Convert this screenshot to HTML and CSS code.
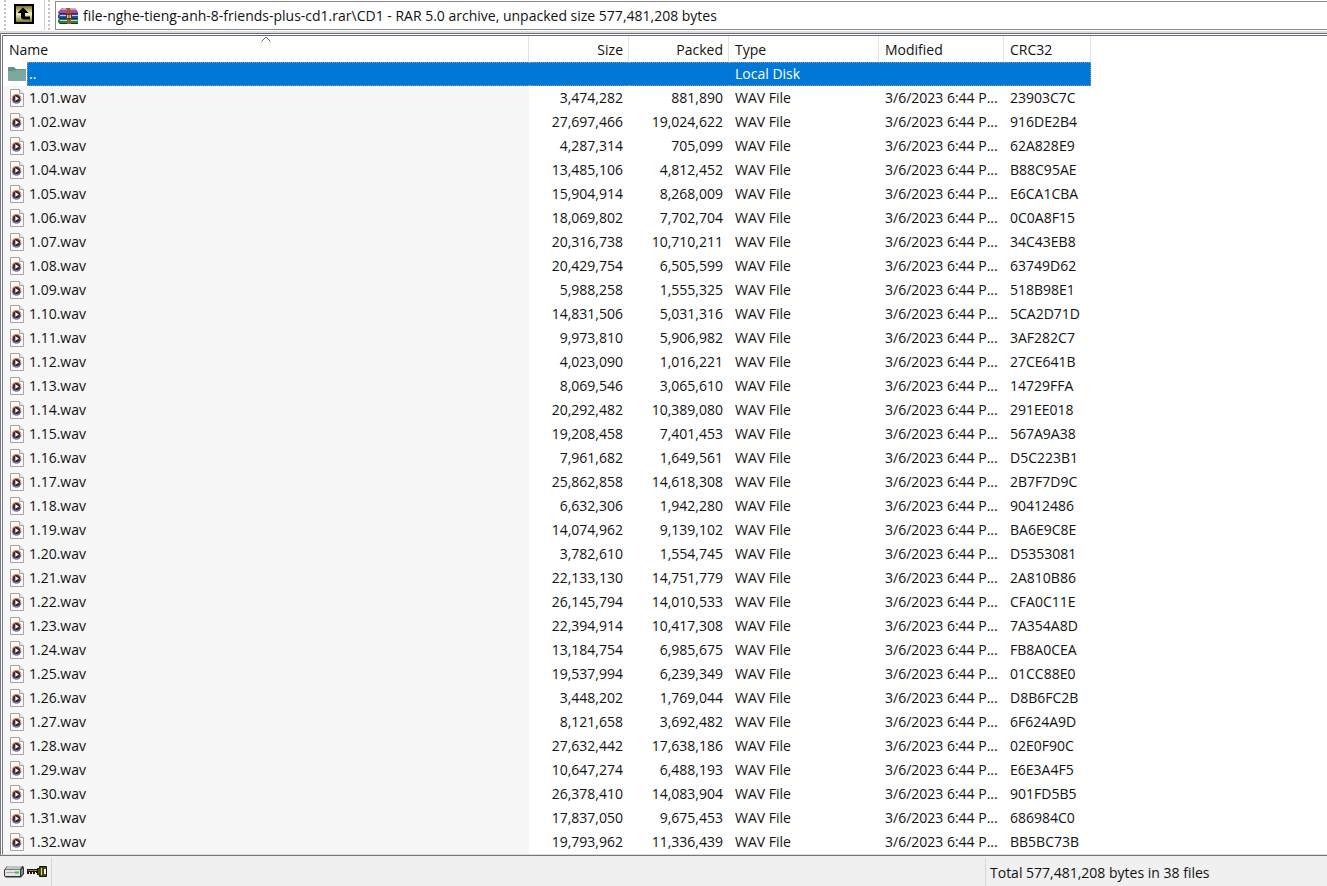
FILE: index.html
```html
<!DOCTYPE html>
<html lang="en">
<head>
    <meta charset="utf-8">
    <title>file-nghe-tieng-anh-8-friends-plus-cd1.rar</title>
    <link rel="stylesheet" href="styles.css">
</head>
<body>
    <svg class="symbols" aria-hidden="true">
        <symbol id="wav" viewBox="0 0 16 18">
            <path d="M1.5 .5h9l4 4v13h-13z" fill="#fdfdfd" stroke="#a4a4a4"/>
            <path d="M10.5 .5v4h4" fill="#eee" stroke="#a4a4a4"/>
            <circle cx="7.5" cy="9.5" r="4.8" fill="#ea9468"/>
            <path d="M2.7 10a4.8 4.8 0 0 0 9.600 0z" fill="#7478b4"/>
            <circle cx="7.500" cy="9.500" r="3.600" fill="#3a2628"/>
            <path d="M6.300 7.300v4.400l3.600-2.200z" fill="#fff"/>
        </symbol>
    </svg>

    <header class="toolbar">
        <div class="grip"></div>
        <button type="button" class="up-button" aria-label="Up one level">
            <svg width="20" height="20" viewBox="0 0 20 20">
                <defs>
                    <linearGradient id="gold" x2="0" y2="1">
                        <stop offset="0" stop-color="#6b6220"/>
                        <stop offset=".5" stop-color="#f4efc4"/>
                        <stop offset="1" stop-color="#6e6628"/>
                    </linearGradient>
                </defs>
                <rect x="1" y="1" width="18" height="18" fill="url(#gold)" stroke="#000" stroke-width="2"/>
                <path d="M9 3.500L3.500 9H7v3.500q0 3 3 3h6v-3h-5V9h3.500z" fill="#000"/>
            </svg>
        </button>
        <div class="grip second"></div>
        <label class="address">
            <svg width="21" height="16" viewBox="0 0 21 16" aria-hidden="true">
                <path d="M4 0h13l3 4v2H2L0 4z" fill="#a34f8f"/>
                <path d="M5 0h12l1 2H3z" fill="#dba0c4"/>
                <path d="M0 4l2 1h18v1H2L0 5z" fill="#571b50"/>
                <path d="M1 6h19v5H2L0 9V7z" fill="#2c4fae"/>
                <path d="M2 7h18v1H2z" fill="#c3cdea"/>
                <path d="M0 9l2 1h18v1H2L0 10z" fill="#141f5c"/>
                <path d="M1 11h19v5H2l-2-2v-2z" fill="#258544"/>
                <path d="M2 12h18v1H2z" fill="#b5dcb9"/>
                <path d="M0 14l2 1h18v1H2z" fill="#0e401e"/>
                <path d="M8 0h4l1 5v11H9V5z" fill="#9a5a34"/>
                <path d="M8.500 6.500h5v4h-5z" fill="#dcc7a4" stroke="#57351c"/>
                <path d="M11 5v7" stroke="#57351c"/>
            </svg>
            <input type="text" aria-label="Address" readonly value="file-nghe-tieng-anh-8-friends-plus-cd1.rar\CD1 - RAR 5.0 archive, unpacked size 577,481,208 bytes">
        </label>
    </header>

    <main class="list">
        <table class="files">
            <colgroup>
                <col class="col-name">
                <col class="col-size">
                <col class="col-size">
                <col class="col-type">
                <col class="col-modified">
                <col class="col-crc">
            </colgroup>
            <thead>
                <tr>
                    <th>Name
                        <svg class="sort" width="11" height="6" viewBox="0 0 11 6"><path d="M1 5.500l4.500-4.500 4.500 4.500" fill="none" stroke="#666"/></svg>
                    </th>
                    <th class="number">Size</th>
                    <th class="number">Packed</th>
                    <th>Type</th>
                    <th>Modified</th>
                    <th>CRC32</th>
                </tr>
            </thead>
            <tbody id="rows">
                <tr class="selected">
                    <td>
                        <div class="parent">
                            <span class="folder">
                                <svg width="18" height="14" viewBox="0 0 18 14">
                                    <path d="M0 1q0-1 1-1h5l2 2h9q1 0 1 1v10H0z" fill="#5f9384"/>
                                    <path d="M0 4h7l1-1h10v10q0 1-1 1H1q-1 0-1-1z" fill="#7ba99c"/>
                                </svg>
                            </span>
                            <span class="parent-name">..</span>
                        </div>
                    </td>
                    <td></td>
                    <td></td>
                    <td>Local Disk</td>
                    <td></td>
                    <td></td>
                </tr>
            </tbody>
        </table>
    </main>

    <footer class="status">
        <div class="status-icons">
            <svg width="20" height="13" viewBox="0 0 20 13">
                <path d="M3 1h15q2 0 2 2v6l-3 3.500H2L0 11V5z" fill="#333"/>
                <path d="M3.500 1h14.500l-2 3.500H1z" fill="#c4c4c4"/>
                <path d="M1 5h15v6H1z" fill="#e4e4e4"/>
                <path d="M17 5l2-2v5.500l-2 2.500z" fill="#888"/>
                <path d="M2 7.500h9" stroke="#aaa"/>
                <path d="M11 6.500h4v2h-4z" fill="#20d040"/>
            </svg>
            <svg width="20" height="11" viewBox="0 0 20 11">
                <path d="M0 3h11v4H9V6H8v2H6V6H5v2H3V6H2v2H0z" fill="#181808"/>
                <path d="M1 4.500h10" stroke="#8a8440"/>
                <path d="M10.500 2.500h2v-2h7v10h-7v-2h-2z" fill="#4a4618" stroke="#111"/>
                <path d="M14 2h1v7h-1z" fill="#ddd79a"/>
                <path d="M17 3h2v5h-2z" fill="#f5f5e8"/>
            </svg>
        </div>
        <div class="status-selected"></div>
        <div class="status-total">Total 577,481,208 bytes in 38 files</div>
    </footer>

    <script src="files.js"></script>
</body>
</html>
```

FILE: styles.css
```css
* {
    box-sizing: border-box;
}
body {
    margin: 0;
    height: 100vh;
    display: flex;
    flex-direction: column;
    overflow: hidden;
    background-color: #fff;
    color: #111;
    font-family: "Open Sans", "Noto Sans", sans-serif;
    font-size: 14px;
    line-height: 24px;
}
svg {
    display: block;
    flex: none;
}
.symbols {
    position: absolute;
    width: 0;
    height: 0;
}

/* toolbar */
.toolbar {
    display: flex;
    flex: none;
    height: 33px;
    padding-bottom: 1px;
    border-bottom: 2px solid #dcdce0;
}
.grip {
    width: 2px;
    margin-left: 4px;
    background: repeating-linear-gradient(#c4c4c4 0 2px, #fff 2px 4px);
}
.grip.second {
    margin-left: 3px;
}
.up-button {
    display: flex;
    width: 39px;
    padding: 4px 0 0 8px;
    border: 0;
    border-right: 1px solid #ccc;
    background: none;
}
.address {
    display: flex;
    flex: 1;
    align-items: center;
    gap: 4px;
    margin: 1px 0 0 5px;
    padding-left: 2px;
    border: 1px solid #8a8a8f;
    border-right: 0;
}
.address input {
    flex: 1;
    min-width: 0;
    padding: 0;
    border: 0;
    outline: 0;
    background: none;
    color: inherit;
    font: inherit;
}

/* file list */
.list {
    flex: 1;
    min-height: 0;
    overflow: hidden;
    border-top: 3px double #686870;
    border-left: 3px double #77777f;
    border-bottom: 1px solid #ddd;
}
.files {
    width: 1088px;
    table-layout: fixed;
    border-collapse: separate;
    border-spacing: 0;
}
.col-name {
    width: 526px;
}
.col-size {
    width: 100px;
}
.col-type {
    width: 150px;
}
.col-modified {
    width: 125px;
}
.col-crc {
    width: 87px;
}
.files th,
.files td {
    height: 24px;
    padding: 0 6px;
    text-align: left;
    font-weight: 400;
    white-space: nowrap;
    overflow: hidden;
}
.files th {
    position: relative;
    height: 26px;
    padding-top: 2px;
    border-right: 1px solid #e3e3e3;
}
.files .number {
    text-align: right;
}
.files th.number {
    padding-right: 5px;
}
.sort {
    position: absolute;
    top: 0;
    left: 50%;
    transform: translateX(-50%);
}
.files td:first-child {
    background-color: #f7f7f7;
}
.file-name {
    display: flex;
    align-items: center;
    gap: 4px;
}
.files .selected td {
    background: #0078d7;
    color: #fff;
    border-top: 1px dotted #999;
    border-bottom: 1px dotted #999;
    line-height: 22px;
}
.files .selected td:first-child {
    padding: 0;
    border: 0;
    background: #fff;
}
.files .selected td:last-child {
    border-right: 1px dotted #999;
}
.parent {
    display: flex;
}
.folder {
    width: 24px;
    padding: 5px 0 0 5px;
}
.parent-name {
    flex: 1;
    height: 24px;
    padding-left: 1px;
    border: 1px dotted #999;
    border-right: 0;
    background-color: #0078d7;
}

/* status bar */
.status {
    display: flex;
    flex: none;
    height: 31px;
    border-top: 1px solid #777;
    background-color: #f0f0f0;
    padding-top: 2px;
}
.status-icons {
    display: flex;
    align-items: center;
    gap: 3px;
    width: 52px;
    padding: 0 0 2px 4px;
    border-right: 1px solid #d7d7d7;
}
.status-selected {
    flex: 1;
}
.status-total {
    width: 342px;
    padding: 3px 0 0 4px;
    border-left: 1px solid #d7d7d7;
}
```

FILE: files.js
```js
// size, packed, crc for 1.01.wav, 1.02.wav and so on
const files = [
    ["3,474,282", "881,890", "23903C7C"],
    ["27,697,466", "19,024,622", "916DE2B4"],
    ["4,287,314", "705,099", "62A828E9"],
    ["13,485,106", "4,812,452", "B88C95AE"],
    ["15,904,914", "8,268,009", "E6CA1CBA"],
    ["18,069,802", "7,702,704", "0C0A8F15"],
    ["20,316,738", "10,710,211", "34C43EB8"],
    ["20,429,754", "6,505,599", "63749D62"],
    ["5,988,258", "1,555,325", "518B98E1"],
    ["14,831,506", "5,031,316", "5CA2D71D"],
    ["9,973,810", "5,906,982", "3AF282C7"],
    ["4,023,090", "1,016,221", "27CE641B"],
    ["8,069,546", "3,065,610", "14729FFA"],
    ["20,292,482", "10,389,080", "291EE018"],
    ["19,208,458", "7,401,453", "567A9A38"],
    ["7,961,682", "1,649,561", "D5C223B1"],
    ["25,862,858", "14,618,308", "2B7F7D9C"],
    ["6,632,306", "1,942,280", "90412486"],
    ["14,074,962", "9,139,102", "BA6E9C8E"],
    ["3,782,610", "1,554,745", "D5353081"],
    ["22,133,130", "14,751,779", "2A810B86"],
    ["26,145,794", "14,010,533", "CFA0C11E"],
    ["22,394,914", "10,417,308", "7A354A8D"],
    ["13,184,754", "6,985,675", "FB8A0CEA"],
    ["19,537,994", "6,239,349", "01CC88E0"],
    ["3,448,202", "1,769,044", "D8B6FC2B"],
    ["8,121,658", "3,692,482", "6F624A9D"],
    ["27,632,442", "17,638,186", "02E0F90C"],
    ["10,647,274", "6,488,193", "E6E3A4F5"],
    ["26,378,410", "14,083,904", "901FD5B5"],
    ["17,837,050", "9,675,453", "686984C0"],
    ["19,793,962", "11,336,439", "BB5BC73B"]
];

const rows = document.getElementById("rows");

files.forEach(([size, packed, crc], i) => {
    const name = `1.${String(i + 1).padStart(2, "0")}.wav`;
    const row = document.createElement("tr");
    row.innerHTML = `
        <td><div class="file-name"><svg width="16" height="18"><use href="#wav"/></svg>${name}</div></td>
        <td class="number">${size}</td>
        <td class="number">${packed}</td>
        <td>WAV File</td>
        <td>3/6/2023 6:44 P...</td>
        <td>${crc}</td>`;
    rows.appendChild(row);
});
```
